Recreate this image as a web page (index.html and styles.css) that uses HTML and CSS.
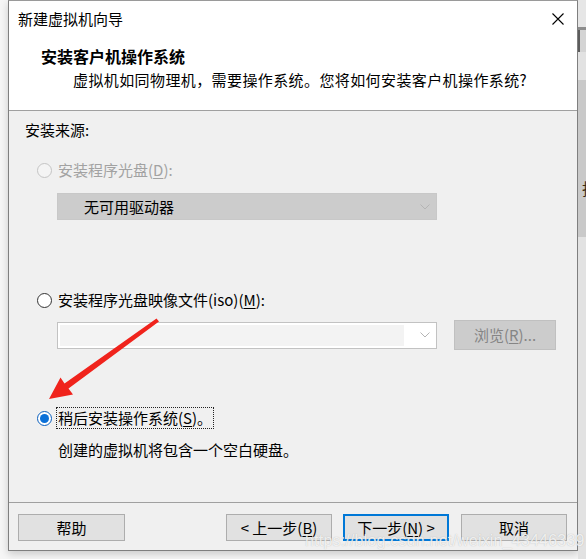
FILE: index.html
```html
<!DOCTYPE html>
<html lang="zh-CN">
<head>
<meta charset="utf-8">
<title>新建虚拟机向导</title>
<link rel="stylesheet" href="styles.css">
</head>
<body>
<div class="gap-left"></div>
<div class="dialog">
  <div class="top">
    <div class="titlebar">
      <span class="title">新建虚拟机向导</span>
      <svg class="close" width="12" height="12" viewBox="0 0 12 12"><path d="M0.5 0.5 L11.5 11.5 M11.5 0.5 L0.5 11.5" stroke="#000" stroke-width="1.1" fill="none"/></svg>
    </div>
    <div class="header">
      <div class="heading">安装客户机操作系统</div>
      <div class="subtitle">虚拟机如同物理机，需要操作系统。您将如何安装客户机操作系统?</div>
    </div>
  </div>
  <div class="content">
    <div class="label">安装来源:</div>
    <div class="radio-row row1 disabled">
      <span class="radio"></span>
      <span class="rtext">安装程序光盘(<u>D</u>):</span>
    </div>
    <div class="combo-disabled">
      <span class="ctext">无可用驱动器</span>
      <svg class="chev" width="10" height="6" viewBox="0 0 10 6"><path d="M0.5 0.5 L5 5 L9.5 0.5" stroke="#b4b4b4" fill="none"/></svg>
    </div>
    <div class="radio-row row2">
      <span class="radio"></span>
      <span class="rtext">安装程序光盘映像文件(iso)(<u>M</u>):</span>
    </div>
    <div class="iso-row">
      <div class="combo-input">
        <div class="field"></div>
        <svg class="chev" width="10" height="6" viewBox="0 0 10 6"><path d="M0.5 0.5 L5 5 L9.5 0.5" stroke="#b4b4b4" fill="none"/></svg>
      </div>
      <div class="browse">浏览(<u>R</u>)...</div>
    </div>
    <div class="radio-row row3">
      <span class="radio checked"></span>
      <span class="rtext focus">稍后安装操作系统(<u>S</u>)。</span>
    </div>
    <div class="desc">创建的虚拟机将包含一个空白硬盘。</div>
  </div>
  <div class="footer">
    <div class="btn help">帮助</div>
    <div class="spacer"></div>
    <div class="btn">&lt; 上一步(<u>B</u>)</div>
    <div class="btn next">下一步(<u>N</u>) &gt;</div>
    <div class="btn cancel">取消</div>
  </div>
</div>
<div class="behind">
  <div class="b1"></div>
  <div class="b2"></div>
  <div class="b3"></div>
  <div class="b4"></div>
  <div class="b5"><span class="bchar">指</span></div>
  <div class="b6"></div>
</div>
<svg class="arrow" width="586" height="559" viewBox="0 0 586 559">
  <polygon points="156.5,318.5 159,321.5 68.5,388.5 73,394.5 49,399 60.5,377.5 64.5,383.5" fill="#f0231c"/>
</svg>
<div class="watermark">https://blog.csdn.net/weixin_43446339</div>
</body>
</html>
```
FILE: styles.css
```css
html, body {
  margin: 0;
  padding: 0;
}
body {
  width: 586px;
  height: 559px;
  overflow: hidden;
  background: #f6f6f6;
  display: flex;
  align-items: flex-start;
  position: relative;
  font-family: "Noto Sans CJK SC", "Microsoft YaHei", sans-serif;
  font-size: 15px;
  line-height: 20px;
  color: #000;
}
u {
  text-decoration: underline;
  text-underline-offset: 2px;
  text-decoration-thickness: 1px;
}
.gap-left {
  width: 8px;
  flex: none;
}
.dialog {
  width: 570px;
  height: 551px;
  flex: none;
  box-sizing: border-box;
  border: 1px solid #7f7f7f;
  border-top-color: #9a9a9a;
  background: #f0f0f0;
  display: flex;
  flex-direction: column;
  box-shadow: 0 3px 8px rgba(0, 0, 0, 0.18);
}
.top {
  background: #fff;
  height: 109px;
  border-bottom: 1px solid #a0a0a0;
  flex: none;
}
.titlebar {
  height: 36px;
  display: flex;
  align-items: center;
  padding-left: 9px;
  padding-right: 13px;
}
.title {
  flex: 1;
  font-size: 15px;
}
.close {
  display: block;
}
.header {
  padding-top: 9px;
}
.heading {
  font-weight: bold;
  font-size: 16px;
  padding-left: 32px;
  line-height: 20px;
}
.subtitle {
  padding-left: 64px;
  margin-top: 4px;
  letter-spacing: 0.4px;
}
.content {
  flex: 1;
  padding: 9px 0 0 16px;
}
.label {
  height: 20px;
}
.radio-row {
  display: flex;
  align-items: center;
  height: 20px;
  padding-left: 12px;
}
.row1 { margin-top: 20px; }
.row2 { margin-top: 70px; }
.row3 { margin-top: 58px; }
.radio {
  width: 15px;
  height: 15px;
  box-sizing: border-box;
  border: 1px solid #333;
  border-radius: 50%;
  background: #fff;
  margin-right: 6px;
  flex: none;
  display: flex;
  align-items: center;
  justify-content: center;
}
.disabled .radio {
  border-color: #c4c4c4;
  background: #f4f4f4;
}
.disabled .rtext {
  color: #a2a2a2;
}
.radio.checked {
  border-color: #0a5fbd;
}
.radio.checked::after {
  content: "";
  width: 9px;
  height: 9px;
  border-radius: 50%;
  background: #0a70d8;
}
.focus {
  outline: 1px dotted #222;
  outline-offset: 0;
  padding: 0 1px;
  margin-left: -1px;
}
.combo-disabled {
  margin: 13px 0 0 32px;
  width: 380px;
  height: 27px;
  box-sizing: border-box;
  background: #cccccc;
  border: 1px solid #c8c8c8;
  display: flex;
  align-items: center;
  padding-left: 26px;
  padding-right: 6px;
}
.ctext {
  flex: 1;
}
.chev {
  display: block;
}
.iso-row {
  margin: 10px 0 0 32px;
  display: flex;
  align-items: center;
  height: 30px;
}
.combo-input {
  width: 380px;
  height: 27px;
  box-sizing: border-box;
  border: 1px solid #c2c2c2;
  background: #fff;
  padding: 2px 6px 2px 2px;
  display: flex;
  align-items: center;
}
.field {
  flex: 1;
  height: 100%;
  background: #f3f3f3;
  margin-right: 16px;
}
.browse {
  margin-left: 17px;
  width: 102px;
  height: 30px;
  box-sizing: border-box;
  background: #cccccc;
  border: 1px solid #c0c0c0;
  color: #858585;
  display: flex;
  align-items: center;
  justify-content: center;
}
.desc {
  margin: 12px 0 0 33px;
}
.footer {
  flex: none;
  height: 48px;
  box-sizing: border-box;
  border-top: 1px solid #a0a0a0;
  display: flex;
  align-items: flex-start;
  padding: 11px 10px 0 9px;
}
.spacer {
  flex: 1;
}
.btn {
  width: 106px;
  height: 27px;
  box-sizing: border-box;
  background: #e1e1e1;
  border: 1px solid #adadad;
  display: flex;
  align-items: center;
  justify-content: center;
  margin-left: 11px;
}
.btn.help {
  width: 107px;
  margin-left: 0;
}
.btn.next {
  border: 2px solid #0078d7;
}
.btn.cancel {
  margin-left: 12px;
}
.behind {
  width: 8px;
  flex: none;
  height: 559px;
  display: flex;
  flex-direction: column;
  overflow: hidden;
}
.b1 { height: 27px; background: #e6e6e6; }
.b2 { height: 3px; background: #8c8c8c; }
.b3 { height: 22px; background: #d4d4d4; border-left: 2px solid #5c5c5c; }
.b4 { height: 28px; background: #e2e2e2; }
.b5 {
  height: 157px;
  background: #c9c9c9;
  position: relative;
  overflow: hidden;
}
.bchar {
  position: absolute;
  left: 4px;
  top: 98px;
  font-size: 16px;
  color: #3a2a10;
}
.b6 { flex: 1; background: #e2e2e2; }
.arrow {
  position: absolute;
  left: 0;
  top: 0;
  pointer-events: none;
}
.watermark {
  position: absolute;
  left: 305px;
  top: 532px;
  font-family: "Liberation Sans", Arial, sans-serif;
  font-size: 16px;
  line-height: 18px;
  color: rgba(255, 255, 255, 0.8);
  text-shadow: 0 0 1px rgba(130, 130, 130, 0.55);
  letter-spacing: 0.2px;
  pointer-events: none;
}
```
